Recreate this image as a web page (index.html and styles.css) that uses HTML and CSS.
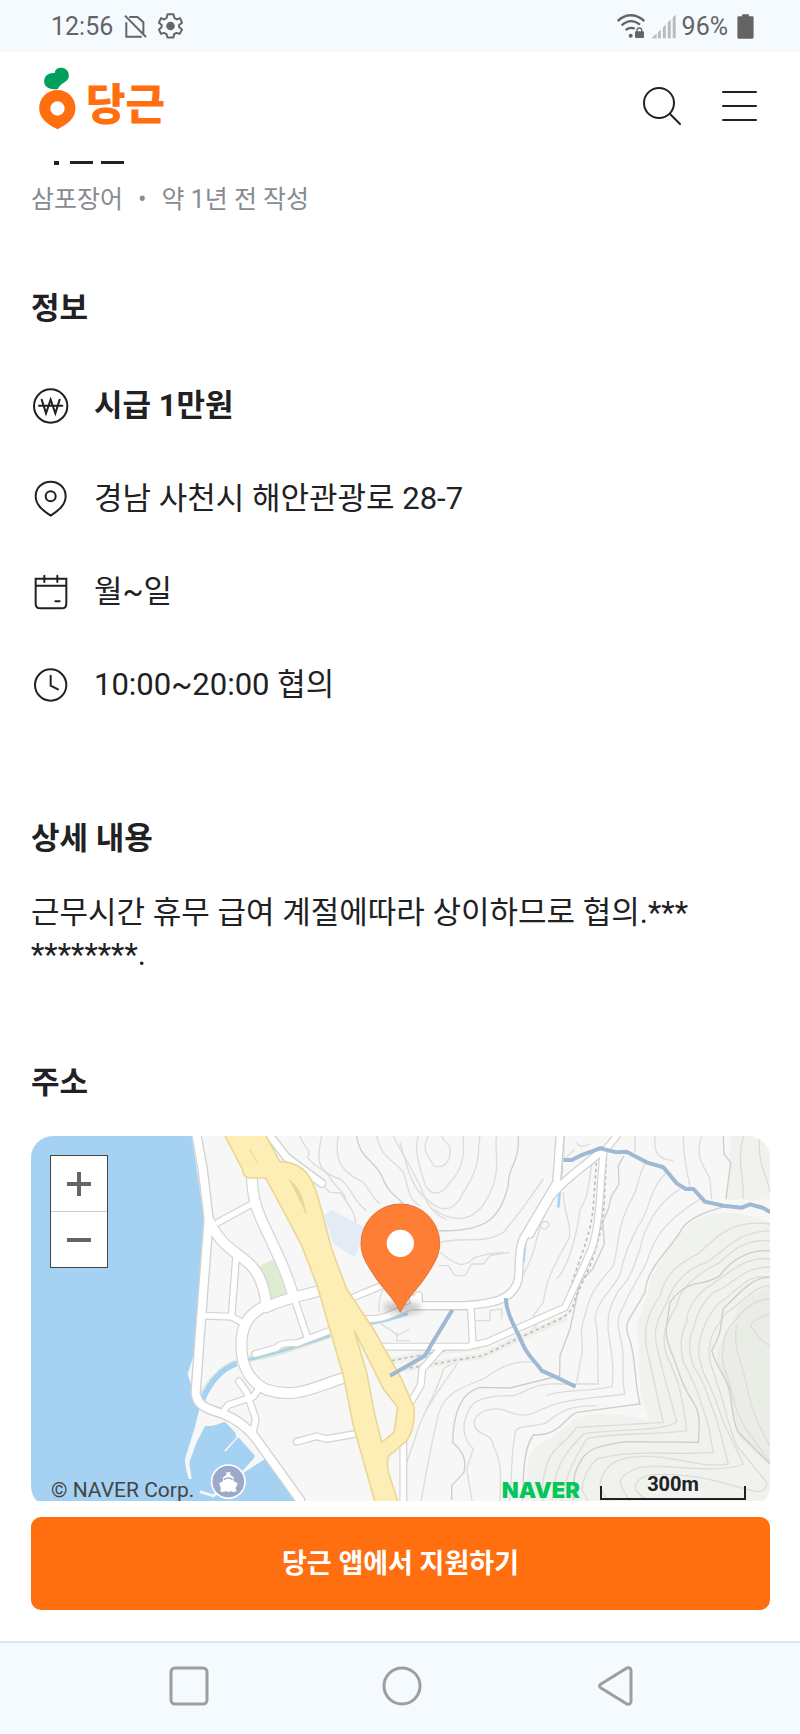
FILE: index.html
```html
<!DOCTYPE html>
<html lang="ko">
<head>
<meta charset="utf-8">
<meta name="viewport" content="width=device-width, initial-scale=1">
<title>당근</title>
<link rel="stylesheet" href="styles.css">
</head>
<body>
<div class="status">
  <div class="status-group">
    <span>12:56</span>
    <svg class="status-nosim" viewBox="370 38 70 74" width="23" height="25" fill="none" stroke="#646464" stroke-width="6"><path d="M377 62V106H424M386 46H411L429 62V96M373 42L437 107"/></svg>
    <svg class="status-gear" viewBox="470 38 76 78" width="25" height="26" fill="none" stroke="#646464" stroke-width="6" stroke-linejoin="round"><path d="M499 41H517L520 53L528 57L537 53L543 67L534 74V80L543 88L536 101L526 98L519 102L517 112H499L496 102L488 98L479 101L473 88L481 80V74L473 67L479 53L488 57L496 53Z"/><circle cx="508" cy="77" r="13" fill="#646464" stroke="none"/></svg>
  </div>
  <div class="status-group status-group-right">
    <svg class="status-wifi" viewBox="650 36 90 78" width="30" height="26" fill="none" stroke="#646464" stroke-width="7"><path d="M655 60Q694 26 735 60M667 73Q694 49 722 71M679 87Q692 77 706 83"/><circle cx="694" cy="104" r="6" fill="#646464" stroke="none"/><rect x="707" y="91" width="27" height="20" rx="3" fill="#646464" stroke="none"/><path d="M713 93V87Q713 81 720 81T727 87V93" stroke-width="4"/></svg>
    <svg class="status-signal" viewBox="750 36 76 76" width="25" height="25" fill="#b9bcbe"><path d="M751 110L767 95V110ZM771 110V92L780 83V110ZM786 110V77L795 68V110ZM801 110V62L810 52V110ZM816 110V46L825 38V110Z"/></svg>
    <span>96%</span>
    <svg class="status-battery" viewBox="1010 38 50 74" width="17" height="25" fill="#646464"><path d="M1025 39H1045V45H1055Q1059 45 1059 49V107Q1059 111 1055 111H1015Q1011 111 1011 107V49Q1011 45 1015 45H1025Z"/></svg>
  </div>
</div>

<header class="header">
  <a class="logo" href="#">
    <svg viewBox="117 200 110 189" width="37" height="63" aria-hidden="true">
      <path d="M172 269C203 269 226 293 226 324C226 356 198 374 172 387C146 374 117 356 117 324C117 293 141 269 172 269ZM172 303A21 21 0 1 0 172 346A21 21 0 1 0 172 303Z" fill="#ff6f0f"/>
      <path d="M164 218C164 196 206 196 206 226C206 246 180 247 173 266C150 269 132 262 132 243C132 224 148 216 164 218Z" fill="#00a05b"/>
    </svg>
    <span class="logo-text">당근</span>
  </a>
  <div class="header-actions">
    <button type="button" class="icon-button" aria-label="검색">
      <svg viewBox="0 0 48 48" width="48" height="48" fill="none" stroke="#212124" stroke-width="2" stroke-linecap="round"><circle cx="21" cy="21" r="15"/><path d="M32 32L42 42"/></svg>
    </button>
    <button type="button" class="icon-button" aria-label="메뉴">
      <svg viewBox="0 0 48 48" width="48" height="48" fill="none" stroke="#212124" stroke-width="2" stroke-linecap="round"><path d="M7 10H40M7 24H40M7 38H40"/></svg>
    </button>
  </div>
</header>

<main class="main">
  <svg class="title-edge" viewBox="0 0 94 5" width="94" height="5" fill="#212124" aria-hidden="true"><path d="M23 1H28V5H23ZM39 1H62V4H39ZM70 1H93V4H70Z"/></svg>
  <p class="meta"><span>삼포장어</span><span>•</span><span>약 1년 전 작성</span></p>

  <section class="info">
    <h2 class="heading">정보</h2>
    <ul class="info-list">
      <li class="info-item info-item-strong">
        <svg class="info-icon" viewBox="96 354 111 114" width="37" height="38"><circle cx="152" cy="411" r="50"/><path d="M125 392L138 433L152 392L166 433L179 392M117 410H187"/></svg>
        <span>시급 1만원</span>
      </li>
      <li class="info-item">
        <svg class="info-icon" viewBox="96 632 111 114" width="37" height="38"><path d="M152 739C128 723 107 707 107 681C107 655 127 637 152 637C177 637 197 655 197 681C197 707 176 723 152 739Z"/><circle cx="152" cy="681" r="15"/></svg>
        <span>경남 사천시 해안관광로 28-7</span>
      </li>
      <li class="info-item">
        <svg class="info-icon" viewBox="96 911 111 114" width="37" height="38"><path d="M107 928H199V1003Q199 1017 185 1017H121Q107 1017 107 1003ZM107 949H199M133 919V938M172 919V938M166 996H179"/></svg>
        <span>월~일</span>
      </li>
      <li class="info-item">
        <svg class="info-icon" viewBox="96 1190 111 114" width="37" height="38"><circle cx="152" cy="1247" r="47"/><path d="M152 1219V1249L174 1260"/></svg>
        <span>10:00~20:00 협의</span>
      </li>
    </ul>
  </section>

  <section class="detail">
    <h2 class="heading">상세 내용</h2>
    <p class="detail-text">근무시간 휴무 급여 계절에따라 상이하므로 협의.***<br>********.</p>
  </section>

  <section class="address">
    <h2 class="heading">주소</h2>
    <div class="map">
      <svg class="map-canvas" viewBox="33 21 2217 1116" preserveAspectRatio="xMidYMin slice" aria-hidden="true">
        <defs>
          <filter id="soft" x="-50%" y="-100%" width="200%" height="300%"><feGaussianBlur stdDeviation="11"/></filter>
        </defs>
        <rect x="0" y="0" width="2300" height="1200" fill="#f7f7f7"/>

        <!-- hills -->
        <g transform="translate(1140 0)">
          <path d="M990 21H1120V285C1010 240 930 240 860 290C790 370 780 410 750 450C740 530 710 560 710 610C730 700 700 780 750 876C680 850 560 850 520 870C480 920 420 940 395 965C370 1020 390 1060 370 1137H1120V210L975 212L990 100Z" fill="#f0f2ed"/>
          <path d="M1120 470C1060 490 1010 510 1000 590C960 640 930 680 970 740C1000 820 1000 900 1020 930L1120 1020Z" fill="#e9ede6"/>
        </g>

        <!-- contour lines -->
        <g fill="none" stroke="#dcdcd8" stroke-width="4">
          <path d="M840 21C850 60 880 60 862 85C900 130 920 120 932 150C960 190 970 180 980 220C1010 260 1005 270 1008 300M905 21C885 110 900 130 960 150C1000 180 1000 220 1040 245M955 21C940 100 970 130 1030 160C1060 200 1060 210 1080 225M1070 21C1085 90 1120 90 1150 130C1170 190 1160 200 1200 232M1120 21C1150 80 1170 110 1200 170C1220 220 1230 250 1280 272M905 165L930 190L962 192L985 225M1090 485C1070 510 1080 540 1075 550M1070 560C1080 600 1110 590 1130 620L1170 600M1040 710C1090 760 1110 790 1100 840M1130 610V635H1170"/>
          <g transform="translate(1140 0)">
            <path d="M85 21C60 70 90 80 100 110C130 120 150 100 150 70C155 45 130 40 125 21M55 21C40 60 60 120 75 165C90 200 120 205 150 160C200 110 190 50 190 21M0 40C20 110 35 180 80 210C130 260 170 240 190 190C250 100 230 60 240 21M100 240C170 290 230 270 260 210C310 130 280 60 290 21M120 340C200 320 240 350 310 310C370 240 380 220 430 150M120 370C170 410 190 420 225 385L265 375L310 370M115 410L145 410L165 440L195 440L215 405L250 405L270 380L330 370"/>
            <path d="M580 85C565 150 570 200 540 240C530 330 500 420 470 450M490 190C490 250 515 280 508 325C470 400 440 440 430 520L400 560C430 590 390 610 350 620M430 265L410 330C400 390 370 430 340 500M420 285C440 265 460 290 435 300Q420 300 420 285M530 40Q540 60 570 45M220 575H270V545L305 540V570"/>
            <path d="M735 105C710 150 720 170 690 220C650 300 660 330 640 410C590 470 570 490 555 560C530 620 560 650 540 700L530 760M800 130C740 190 750 250 715 290C690 340 670 380 660 440C620 500 590 520 585 570C600 630 590 680 595 765L480 765M840 180C760 230 730 310 720 360C700 420 690 450 655 485C630 530 620 560 625 610C640 700 640 720 637 772C560 790 480 780 440 800M900 210C790 280 760 330 740 400C720 440 700 470 685 500C660 560 645 560 660 620C680 690 660 740 675 795C560 810 500 810 440 835"/>
            <path d="M765 21C760 80 780 90 820 95M850 21C850 100 860 110 870 175M905 21C880 90 920 120 930 150L935 210M705 21V70M1030 21C1010 100 1030 130 1030 210M1080 21C1070 110 1100 130 1110 190"/>
            <path d="M1110 285C1000 270 950 320 900 370C850 400 800 420 780 500C740 560 730 600 740 660C760 740 770 800 790 880L530 895C500 940 450 960 440 1010C420 1070 430 1090 430 1137M1110 305C1010 310 980 360 920 400C860 420 820 460 800 520C770 580 760 600 770 650C790 740 810 800 830 878C790 910 620 900 550 915C500 970 460 1000 455 1137M1110 335C1040 330 1000 360 960 400C900 430 840 470 830 530C800 580 780 620 800 680C840 760 850 820 860 905C760 920 620 910 560 930C530 980 500 1020 480 1137M1110 390C1030 380 980 440 930 470C880 500 860 550 860 580C840 620 840 650 850 700C890 770 900 810 925 890L940 970C820 980 700 960 590 990C560 1020 550 1050 545 1080L575 1137M1110 415C1030 410 1000 470 940 490C900 530 890 560 880 600C860 640 870 680 880 710C920 770 920 800 950 870L985 1005C880 1020 820 970 690 985C600 1000 600 1060 600 1080L640 1137M1110 445C1040 430 1010 490 960 520C920 560 910 600 900 630C890 680 900 690 910 730C940 790 950 820 970 880L1030 1005C940 1040 800 1000 720 1015C650 1040 650 1060 680 1100L700 1137"/>
            <path d="M1110 470C1060 470 1030 520 980 550C950 590 930 620 930 650C920 690 940 720 950 760C980 840 980 880 1010 950L1100 1060C1100 1110 1050 1080 1000 1070C900 1040 800 1030 740 1040C690 1060 700 1090 740 1110M1110 510C1070 510 1040 530 1010 570C980 600 970 620 970 660C960 700 980 730 990 770C1010 850 1020 880 1060 930L1110 1000M1110 555C1060 570 1040 590 1060 600C1080 640 1110 650 1110 650M1010 590C1000 650 1020 690 1030 730C1050 790 1040 830 1110 950"/>
            <path d="M400 700C330 690 280 730 250 750C170 780 120 800 110 880C90 960 80 1020 60 1137M480 765C400 760 380 790 340 800C260 800 210 810 200 860C180 900 200 940 220 960L200 1020L220 1137M440 835C400 850 380 870 330 850C290 830 230 840 222 880C230 930 270 900 280 950C310 1010 300 1050 300 1137M590 830C500 830 480 850 440 880C400 900 340 880 345 920C330 980 340 1050 325 1137M260 670C200 700 170 690 130 720C110 800 60 860 45 930L20 1000M180 690C150 740 100 800 70 860"/>
          </g>
        </g>
        <g fill="none" stroke="#cdcdc9" stroke-width="4" transform="translate(1140 0)">
          <path d="M-130 21C-120 90 -80 90 -55 140C-30 200 -20 190 10 225M355 21C360 100 320 120 325 170C300 260 270 310 115 305M970 21L972 75L992 100L978 210M672 80L655 110L657 165L635 200L625 240L608 280L613 345L578 420L540 460L510 600L480 680L479 740L330 777L240 775C180 790 160 860 158 940C190 970 200 990 192 1030L155 1070L155 1113"/>
          <path d="M978 232C900 250 850 280 840 310C800 370 740 420 735 490C690 570 670 580 685 620C710 680 700 750 720 825L530 850C490 870 480 920 400 918C370 960 370 1030 368 1113M1110 365C1030 360 980 410 960 440C900 480 870 440 810 520C800 600 790 600 810 660C840 730 840 760 880 820C900 850 900 880 895 940L680 938C590 950 560 960 540 1000C520 1030 520 1060 520 1113M1110 445C1060 440 1010 500 970 540C960 580 970 610 935 665C950 720 980 740 990 790C1000 860 1000 880 1015 910L1110 1005"/>
        </g>

        <!-- sea -->
        <path d="M0 0H512L530 120L551 265L543 560L530 650L503 735L520 790L540 835L523 900L495 990C495 1010 500 1030 507 1050H515L508 1000L530 940L555 892L580 890L615 878L645 910L650 925L612 965L618 967L655 925L705 980L700 990L665 1028L670 1032L735 990L826 1113L840 1140H0Z" fill="#a5d2f3"/>
        <path d="M540 1088L580 1100L615 1075" fill="none" stroke="#f7f7f7" stroke-width="8"/>
        <path d="M540 812C560 770 600 715 650 700M680 690C760 680 830 655 930 618M1040 580C1090 578 1110 565 1160 552" fill="none" stroke="#dcecd0" stroke-width="18"/>
        <path d="M546 815C570 760 600 720 650 704" fill="none" stroke="#a5d2f3" stroke-width="17"/>
        <path d="M650 700C740 680 830 655 930 620M1040 584C1090 580 1120 567 1165 554M1615 235L1625 120V21M1510 400L1516 340" fill="none" stroke="#a5d2f3" stroke-width="8"/>
        <path d="M1632 21V90M1640 85L1665 60M1190 543H1345M1475 505L1500 470" fill="none" stroke="#dcecd0" stroke-width="5"/>
        <path d="M720 410L762 390L800 497L755 511Z" fill="#deecd0"/>
        <path d="M912 257L937 243L1040 300L1004 384L940 345Z" fill="#e3ebf4"/>

        <!-- railway -->
        <path d="M1115 695L1275 665L1380 655M1150 720L1390 680L1480 635L1640 565" fill="none" stroke="#f0f0ea" stroke-width="20"/>
        <path d="M1115 695L1275 665L1380 648L1480 605M1150 720L1390 680L1480 635L1620 570Q1660 550 1665 510L1710 410Q1750 300 1752 230L1760 70M1650 480L1680 390Q1715 300 1720 230L1730 90" fill="none" stroke="#bdbdbd" stroke-width="5" stroke-dasharray="10 9"/>

        <!-- roads: casing, then surface -->
        <g fill="none" stroke="#d2d2d2" stroke-linecap="round" stroke-linejoin="round">
          <path stroke-width="32" d="M530 21L548 120L566 270L556 400L538 640L527 790C530 830 560 840 610 855C650 870 680 895 705 925L840 1113"/>
          <path stroke-width="36" d="M570 280C610 370 680 375 715 440C735 480 735 500 738 520M695 140C700 240 720 260 765 360C790 410 805 450 820 500M738 535C800 505 850 500 900 485M738 530C680 555 660 600 665 660C665 710 690 760 740 782C830 810 880 775 970 747L1050 715"/>
          <path stroke-width="24" d="M595 280L690 228M648 385L635 560M550 560L635 563L670 583M825 515L862 625M705 675L770 657Q780 640 830 643L930 605M657 757L680 790L707 870L700 905M615 840L625 828L700 803L720 775M830 938L890 922L920 930L1005 915L1130 840M1000 505L1090 468M1040 570C1100 575 1130 540 1185 530M1070 653H1340L1400 640L1500 595L1635 535L1665 470L1715 360C1740 280 1738 200 1750 70L1790 21M1352 530L1358 640M1265 655L1207 720L1202 770L1160 840M1150 920V1137"/>
          <path stroke-width="28" d="M1185 530H1330C1400 525 1480 520 1495 450C1500 390 1495 350 1515 320L1610 160L1620 21M1530 315L1590 205C1640 140 1700 110 1745 65M750 21L800 85L820 100L905 163M1185 530L1180 510M1195 525V500"/>
        </g>
        <g fill="none" stroke="#fff" stroke-linecap="round" stroke-linejoin="round">
          <path stroke-width="24" d="M530 21L548 120L566 270L556 400L538 640L527 790C530 830 560 840 610 855C650 870 680 895 705 925L840 1113"/>
          <path stroke-width="29" d="M570 280C610 370 680 375 715 440C735 480 735 500 738 520M695 140C700 240 720 260 765 360C790 410 805 450 820 500M738 535C800 505 850 500 900 485M738 530C680 555 660 600 665 660C665 710 690 760 740 782C830 810 880 775 970 747L1050 715"/>
          <path stroke-width="17" d="M595 280L690 228M648 385L635 560M550 560L635 563L670 583M825 515L862 625M705 675L770 657Q780 640 830 643L930 605M657 757L680 790L707 870L700 905M615 840L625 828L700 803L720 775M830 938L890 922L920 930L1005 915L1130 840M1000 505L1090 468M1040 570C1100 575 1130 540 1185 530M1070 653H1340L1400 640L1500 595L1635 535L1665 470L1715 360C1740 280 1738 200 1750 70L1790 21M1352 530L1358 640M1265 655L1207 720L1202 770L1160 840M1150 920V1137"/>
          <path stroke-width="20" d="M1185 530H1330C1400 525 1480 520 1495 450C1500 390 1495 350 1515 320L1610 160L1620 21M1530 315L1590 205C1640 140 1700 110 1745 65M750 21L800 85L820 100L905 163M1185 530L1180 510M1195 525V500"/>
        </g>

        <!-- highway -->
        <path d="M612 15L668 122Q668 145 690 147H737L790 245L845 350L890 465L970 740L1000 890L1070 1137H1140L1105 1030Q1095 980 1120 970L1160 935Q1186 900 1182 835L1145 750L1060 600L980 480L935 360L905 245C885 170 870 100 780 98L735 15Z" fill="#fceeb5" stroke="#ebd795" stroke-width="5"/>
        <path d="M1003 605L1090 780L1133 835L1122 910L1085 940L1065 860L1040 730Z" fill="#f7f7f7" stroke="#ebd795" stroke-width="5"/>
        <path d="M808 152Q845 180 858 253Q835 200 808 152ZM690 63L710 97Z" fill="#ebd795" stroke="#ebd795" stroke-width="3"/>

        <!-- streams -->
        <path d="M1110 740L1215 680L1235 645L1297 543M1457 507C1460 560 1490 600 1510 650C1530 690 1550 700 1565 725L1620 750L1667 773M1630 93H1655L1685 78L1740 58L1790 70L1820 68L1880 100L1930 115L1970 163L1997 180H2020L2055 218L2110 230L2165 236L2190 226L2230 237L2255 252" fill="none" stroke="#9db9d3" stroke-width="12"/>

        <!-- ferry terminal -->
        <circle cx="625" cy="1058" r="50" fill="#9da8cb" stroke="#fff" stroke-width="5"/>
        <path d="M619 1030H631V1038L641 1045V1057L653 1063L647 1078L650 1086Q640 1092 633 1086Q625 1092 617 1086Q610 1092 600 1086L603 1078L597 1063L609 1057V1045L619 1038Z" fill="#fff"/>
        <path d="M612 1052Q625 1042 638 1052" fill="none" stroke="#9da8cb" stroke-width="5"/>

        <!-- marker -->
        <ellipse cx="1148" cy="536" rx="58" ry="16" fill="#000" opacity=".24" filter="url(#soft)"/>
        <path d="M1141 550C1122 505 1085 480 1050 420C1032 392 1023 370 1023 343A118 118 0 0 1 1259 343C1259 370 1250 392 1232 420C1197 480 1160 505 1141 550Z" fill="#ff7e36" stroke="#e5712f" stroke-width="3"/>
        <circle cx="1141" cy="343" r="41" fill="#fff"/>
      </svg>
      <div class="zoom">
        <button type="button" class="zoom-button" aria-label="확대"><svg viewBox="0 0 24 24" width="24" height="24" stroke="#666" stroke-width="4"><path d="M0 12H24M12 0V24"/></svg></button>
        <button type="button" class="zoom-button" aria-label="축소"><svg viewBox="0 0 24 24" width="24" height="24" stroke="#666" stroke-width="4"><path d="M0 12H24"/></svg></button>
      </div>
      <span class="copyright">© NAVER Corp.</span>
      <div class="map-legend">
        <span class="naver">NAVER</span>
        <span class="scale">300m</span>
      </div>
    </div>
  </section>
</main>

<div class="cta">
  <button type="button" class="cta-button">당근 앱에서 지원하기</button>
</div>

<nav class="system-nav">
  <button type="button" class="nav-button" aria-label="최근 앱"><svg viewBox="0 0 40 40" width="40" height="40"><rect x="2" y="2" width="36" height="36" rx="4"/></svg></button>
  <button type="button" class="nav-button" aria-label="홈"><svg viewBox="0 0 40 40" width="40" height="40"><circle cx="20" cy="20" r="18"/></svg></button>
  <button type="button" class="nav-button" aria-label="뒤로"><svg viewBox="0 0 40 40" width="40" height="40"><path d="M6 18L32 2Q36 1 36 5V35Q36 39 32 38L6 22Q3 20 6 18Z"/></svg></button>
</nav>
</body>
</html>
```
FILE: styles.css
```css
* {
  box-sizing: border-box;
}

body {
  margin: 0;
  min-height: 100vh;
  display: flex;
  flex-direction: column;
  background: #fff;
  color: #212124;
  font-family: Roboto, "Noto Sans CJK KR", sans-serif;
}

button {
  border: 0;
  padding: 0;
  background: none;
  font: inherit;
  color: inherit;
}

svg {
  display: block;
  flex: none;
}

.status {
  display: flex;
  justify-content: space-between;
  align-items: center;
  height: 52px;
  padding: 0 46px 0 51px;
  background: #f5faff;
  color: #646464;
  font-size: 25px;
}

.status-group {
  display: flex;
  align-items: center;
  gap: 11px;
}

.status-group-right {
  gap: 9px;
}

.status-signal {
  margin-left: -4px;
  margin-right: -3px;
}

.header {
  display: flex;
  justify-content: space-between;
  height: 108px;
  padding: 15px 36px 0 39px;
}

.logo {
  display: flex;
  align-items: flex-end;
  gap: 10px;
  height: 63px;
  color: #ff6f0f;
  text-decoration: none;
}

.logo-text {
  font-family: "Noto Sans CJK KR", sans-serif;
  font-size: 43px;
  font-weight: 900;
  line-height: 58px;
}

.header-actions {
  display: flex;
  align-items: flex-end;
  height: 63px;
  gap: 30px;
}

.main {
  flex: 1;
  padding: 0 30px 0 31px;
}

.meta {
  display: flex;
  gap: 15px;
  margin: 17px 0 0;
  color: #868b94;
  font-size: 25px;
  line-height: 36px;
}

.heading {
  margin: 0;
  font-size: 31px;
  font-weight: 700;
  line-height: 42px;
}

.info {
  margin-top: 70px;
}

.info-list {
  display: flex;
  flex-direction: column;
  gap: 51px;
  margin: 55px 0 0;
  padding: 0 0 0 1px;
  list-style: none;
}

.info-item {
  display: flex;
  align-items: center;
  gap: 25px;
  font-size: 31px;
  line-height: 42px;
}

.info-item-strong {
  font-weight: 700;
}

.info-icon {
  fill: none;
  stroke: #212124;
  stroke-width: 6;
  stroke-linecap: round;
}

.detail {
  margin-top: 112px;
}

.detail-text {
  margin: 32px 0 0;
  font-size: 31px;
  line-height: 42px;
}

.address {
  margin-top: 86px;
}

/* The lower edge of the map slides under the action bar. */
.map {
  position: relative;
  height: 372px;
  margin: 32px 0 -8px;
  overflow: hidden;
  border-radius: 22px;
  background: #f7f7f7;
}

.map-canvas {
  width: 100%;
  height: 100%;
}

.zoom {
  position: absolute;
  top: 19px;
  left: 19px;
  width: 58px;
  border: 1px solid #444;
  background: #fff;
}

.zoom-button {
  display: flex;
  align-items: center;
  justify-content: center;
  width: 100%;
  height: 55px;
}

.zoom-button + .zoom-button {
  height: 56px;
  border-top: 1px solid #c3cad2;
}

.copyright {
  position: absolute;
  left: 20px;
  bottom: 6px;
  color: #444;
  font-size: 21px;
  line-height: 24px;
}

.map-legend {
  position: absolute;
  right: 24px;
  bottom: 8px;
  display: flex;
  align-items: flex-end;
  gap: 20px;
}

.naver {
  color: #03c75a;
  font-family: Inter, sans-serif;
  font-size: 22px;
  font-weight: 900;
  line-height: 20px;
}

.scale {
  position: relative;
  width: 146px;
  padding-bottom: 4px;
  font-size: 20px;
  font-weight: 700;
  line-height: 24px;
  text-align: center;
}

.scale::after {
  content: "";
  position: absolute;
  left: 0;
  right: 0;
  bottom: 0;
  height: 12px;
  border: 2px solid #212124;
  border-top: 0;
}

.cta {
  position: relative;
  padding: 16px 30px 31px 31px;
  background: #fff;
}

.cta-button {
  width: 100%;
  height: 93px;
  padding-bottom: 4px;
  border-radius: 10px;
  background: #ff6f0f;
  color: #fff;
  font-size: 27px;
  font-weight: 700;
}

.system-nav {
  display: flex;
  justify-content: space-between;
  align-items: center;
  height: 93px;
  padding: 0 165px 5px 169px;
  border-top: 2px solid #dbe4ec;
  background: #f5faff;
  fill: none;
  stroke: #9b9fa2;
  stroke-width: 3;
}
```
